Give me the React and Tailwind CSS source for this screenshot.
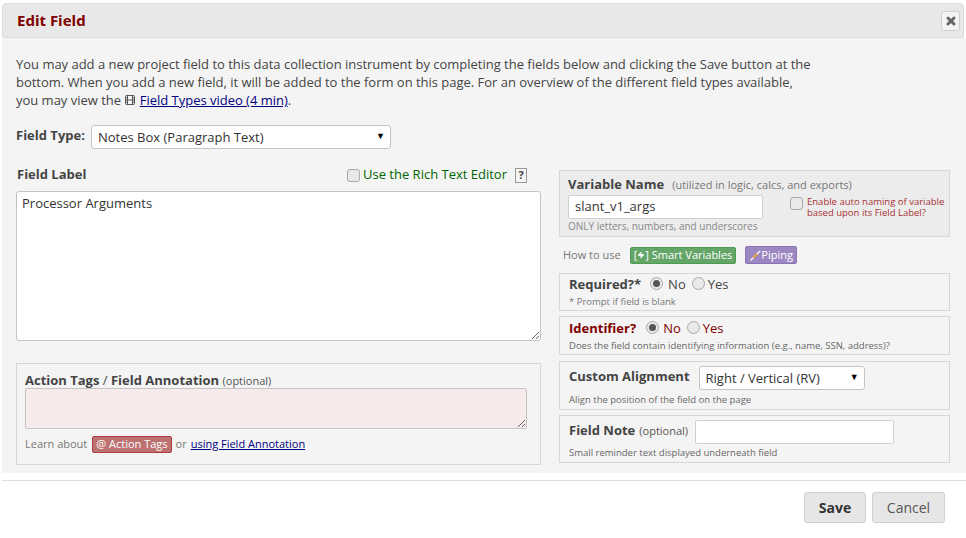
import { X, Film, Zap } from "lucide-react";

function Radio({ checked }) {
  return (
    <span className="flex w-[13px] h-[13px] mb-[3px] rounded-full border border-[#a9a9a9] bg-[#e9e9e9] items-center justify-center">
      {checked && <span className="w-[7px] h-[7px] rounded-full bg-[#555]" />}
    </span>
  );
}

function Checkbox() {
  return <span className="block w-[13px] h-[13px] rounded-[3px] border border-[#a9a9a9] bg-[#e9e9e9]" />;
}

function SelectBox({ value, className }) {
  return (
    <div className={"relative h-[24px] bg-white border border-[#c4c4c4] rounded-[3px] pl-[6px] pt-[2px] flex items-center text-[13px] text-[#333] " + className}>
      {value}
      <span className="absolute right-[5px] top-[3px] text-[9px] text-black">▼</span>
    </div>
  );
}

function Box({ children, className }) {
  return <div className={"border border-[#d7d7d7] pl-[9px] " + className}>{children}</div>;
}

export default function App() {
  return (
    <div className="w-[966px] h-[538px] bg-white overflow-hidden pt-[3px] font-['Open_Sans',sans-serif] text-[#444]">
      {/* header */}
      <div className="ml-[2px] mr-[2px] h-[35px] bg-[#e8e8e8] border border-[#dcdcdc] rounded-t-[4px] flex items-center justify-between pl-[14px] pr-[3px]">
        <h1 className="text-[15px] font-bold text-[#800000]">Edit Field</h1>
        <button className="w-[19px] h-[20px] bg-[#f4f4f4] border border-[#cfcfcf] rounded-[3px] flex items-center justify-center">
          <X size={12} strokeWidth={6} className="text-[#666]" />
        </button>
      </div>

      {/* body */}
      <div className="ml-[2px] h-[435px] bg-[#f4f4f4] pl-[14px] pr-[16px] pt-[17px]">
        <p className="text-[13px] leading-[18px] tracking-[-0.015px] text-[#444] whitespace-nowrap">
          You may add a new project field to this data collection instrument by completing the fields below and clicking the Save button at the
          <br />
          bottom. When you add a new field, it will be added to the form on this page. For an overview of the different field types available,
          <br />
          you may view the <Film size={12} className="inline-block text-[#555] align-[-1px]" />{" "}
          <a className="text-[#000080] underline">Field Types video (4 min)</a>.
        </p>

        <div className="flex items-center mt-[16px]">
          <span className="text-[13px] font-bold w-[75px] mb-[2px]">Field Type:</span>
          <SelectBox value="Notes Box (Paragraph Text)" className="w-[300px]" />
        </div>

        <div className="flex mt-[16px]">
          {/* left column */}
          <div className="w-[525px] shrink-0">
            <div className="flex items-center h-[26px] pb-[6px]">
              <span className="text-[13px] font-bold ml-[1px]">Field Label</span>
              <span className="ml-auto flex items-center">
                <Checkbox />
                <span className="text-[13px] text-[#006400] ml-[3px]">Use the Rich Text Editor</span>
                <span className="ml-[8px] mr-[14px] w-[12px] h-[15px] border border-[#999] text-[11px] font-bold flex items-center justify-center">?</span>
              </span>
            </div>
            <textarea
              defaultValue="Processor Arguments"
              className="block w-[525px] h-[150px] bg-white border border-[#c4c4c4] rounded-[3px] px-[5px] py-[2px] text-[13px] text-[#333] outline-none"
            />
            <div className="mt-[22px] h-[102px] border border-[#d7d7d7] px-[8px] pt-[9px]">
              <div className="text-[13px] leading-[15px]">
                <b>Action Tags</b> / <b>Field Annotation</b> <span className="text-[11px] text-[#555]">(optional)</span>
              </div>
              <textarea className="block w-[502px] h-[41px] bg-[#f6eaea] border border-[#c4c4c4] rounded-[2px] outline-none" />
              <div className="flex items-center mt-[7px] text-[11px] text-[#777]">
                Learn about
                <span className="ml-[5px] h-[17px] px-[3px] bg-[#bd7272] border border-[#b43c3c] rounded-[2px] text-white flex items-center">@ Action Tags</span>
                <span className="ml-[4px]">or</span>
                <a className="ml-[4px] text-[#000080] underline">using Field Annotation</a>
              </div>
            </div>
          </div>

          {/* right column */}
          <div className="ml-[18px] w-[391px] shrink-0 pt-[5px]">
            <div className="h-[67px] bg-[#ececec] border border-[#d7d7d7] pl-[8px] pt-[4px]">
              <div className="leading-[18px] text-[13px]">
                <b>Variable Name</b>
                <span className="ml-[8px] text-[11px] text-[#777]">(utilized in logic, calcs, and exports)</span>
              </div>
              <div className="flex mt-[1px] h-[24px]">
                <div className="w-[195px] h-[24px] bg-white border border-[#d0d0d0] rounded-[2px] pl-[6px] flex items-center text-[13px] text-[#333]">
                  slant_v1_args
                </div>
                <span className="ml-[27px] mt-[2px]"><Checkbox /></span>
                <span className="ml-[4px] text-[9.5px] leading-[11px] text-[#a83232] whitespace-nowrap mt-[1px]">
                  Enable auto naming of variable
                  <br />
                  based upon its Field Label?
                </span>
              </div>
              <div className="text-[10px] leading-[14px] text-[#888]">ONLY letters, numbers, and underscores</div>
            </div>

            <div className="flex items-center h-[36px] text-[11px] text-[#777]">
              <span className="ml-[4px]">How to use</span>
              <span className="ml-[9px] h-[17px] px-[3px] bg-[#64a568] border border-[#4e9a55] rounded-[2px] text-white flex items-center">
                [<Zap size={8} fill="white" strokeWidth={1} />]&nbsp;Smart Variables
              </span>
              <span className="ml-[9px] h-[18px] px-[3px] bg-[#9d87c2] border border-[#8a73b5] rounded-[2px] text-white flex items-center">
                <svg width="13" height="13" viewBox="0 0 13 13" className="-mr-[1px]">
                  <path d="M1.5 11.5 L4.5 8.5" stroke="#f3f0f8" strokeWidth="1.6" />
                  <path d="M4.5 8.5 L8 5" stroke="#e8a13c" strokeWidth="2.4" />
                  <path d="M8 5 L11 2" stroke="#f3f0f8" strokeWidth="1.6" />
                </svg>
                Piping
              </span>
            </div>

            <Box className="h-[38px]">
              <div className="flex items-center h-[22px] text-[13px]">
                <b>Required?*</b>
                <span className="ml-[9px]"><Radio checked /></span>
                <span className="ml-[5px]">No</span>
                <span className="ml-[6px]"><Radio /></span>
                <span className="ml-[3px]">Yes</span>
              </div>
              <div className="text-[9.5px] leading-[12px] text-[#777]">* Prompt if field is blank</div>
            </Box>

            <Box className="h-[39px] mt-[5px]">
              <div className="flex items-center h-[23px] text-[13px] text-[#800000]">
                <b>Identifier?</b>
                <span className="ml-[10px]"><Radio checked /></span>
                <span className="ml-[4px]">No</span>
                <span className="ml-[6px]"><Radio /></span>
                <span className="ml-[3px]">Yes</span>
              </div>
              <div className="text-[9.5px] leading-[12px] text-[#666]">Does the field contain identifying information (e.g., name, SSN, address)?</div>
            </Box>

            <Box className="h-[49px] mt-[6px]">
              <div className="flex items-center h-[31px] text-[13px]">
                <b className="mb-[1px]">Custom Alignment</b>
                <SelectBox value="Right / Vertical (RV)" className="w-[166px] ml-[9px]" />
              </div>
              <div className="text-[9.5px] leading-[13px] text-[#666]">Align the position of the field on the page</div>
            </Box>

            <Box className="h-[48px] mt-[5px]">
              <div className="flex items-center h-[30px] text-[13px]">
                <b>Field Note</b>
                <span className="ml-[4px] text-[11px] text-[#555]">(optional)</span>
                <div className="ml-[7px] w-[199px] h-[24px] mt-[2px] bg-white border border-[#d0d0d0] rounded-[2px]" />
              </div>
              <div className="text-[9.5px] leading-[13px] text-[#666]">Small reminder text displayed underneath field</div>
            </Box>
          </div>
        </div>
      </div>

      {/* footer */}
      <div className="ml-[2px] mt-[7px] border-t border-[#ddd] flex justify-end pt-[11px] pr-[21px]">
        <button className="w-[62px] h-[31px] bg-[#e6e6e6] border border-[#d0d0d0] rounded-[3px] text-[14px] font-bold text-[#333]">Save</button>
        <button className="ml-[6px] w-[73px] h-[31px] bg-[#e6e6e6] border border-[#d0d0d0] rounded-[3px] text-[14px] text-[#555]">Cancel</button>
      </div>
    </div>
  );
}
